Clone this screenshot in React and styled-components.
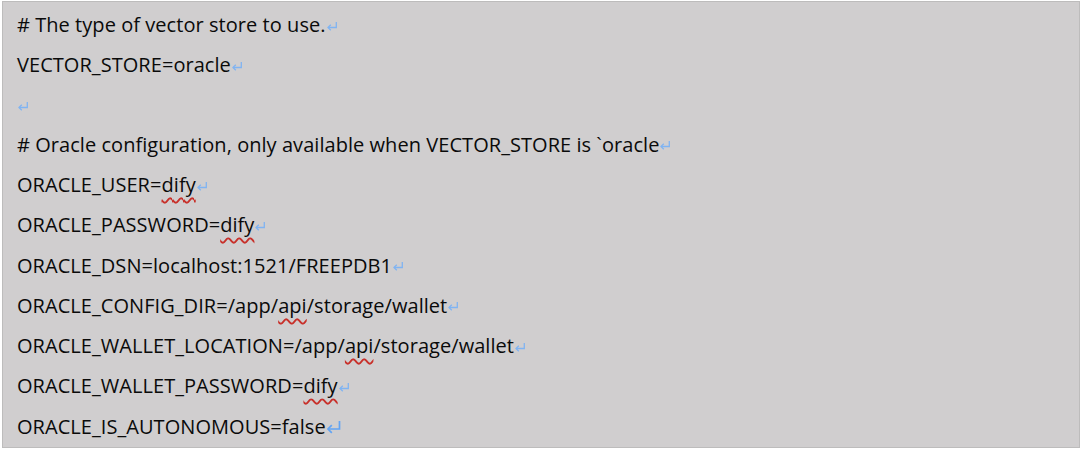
import React from "react";
import styled, { createGlobalStyle } from "styled-components";

const Global = createGlobalStyle`
  html, body { margin: 0; padding: 0; background: #ffffff; }
  body { font-family: "Open Sans", "Noto Sans", sans-serif; }
`;

const Frame = styled.div`
  width: 1080px;
  height: 449px;
  box-sizing: border-box;
  padding: 1px 0 1px 2px;
  background: #ffffff;
`;

const Cell = styled.div`
  box-sizing: border-box;
  height: 447px;
  background: #d0cecf;
  border: 1px solid #bdbcbc;
  padding: 3px 0 0 14px;
  display: flex;
  flex-direction: column;
`;

const Line = styled.div`
  height: 40.3px;
  line-height: 40.3px;
  font-size: 20px;
  letter-spacing: 0.05px;
  color: #0a0a0a;
  white-space: pre;
  display: flex;
  align-items: baseline;
`;

const Squiggle = styled.span`
  text-decoration-line: underline;
  text-decoration-style: wavy;
  text-decoration-color: #c8302a;
  text-decoration-thickness: 1.5px;
  text-underline-offset: 5px;
`;

const Mark = styled.svg`
  flex: none;
  width: ${(p) => (p.$big ? 16 : 12)}px;
  height: ${(p) => (p.$big ? 14 : 11)}px;
  align-self: center;
  position: relative;
  top: ${(p) => (p.$big ? 0 : 1)}px;
`;

const Ret = ({ big }) =>
  big ? (
    <Mark $big viewBox="0 0 16 14" fill="none">
      <path d="M13.5 1 V9 H2" stroke="#62a4f4" strokeWidth="1.7" />
      <path d="M5.8 5.2 L2 9 L5.8 12.8" stroke="#62a4f4" strokeWidth="1.7" />
    </Mark>
  ) : (
    <Mark viewBox="0 0 12 11" fill="none">
      <path d="M10.3 1 V6.5 H2" stroke="#80b4f2" strokeWidth="1.3" />
      <path d="M4.8 3.7 L2 6.5 L4.8 9.3" stroke="#80b4f2" strokeWidth="1.3" />
    </Mark>
  );

export default function App() {
  return (
    <>
      <Global />
      <Frame>
        <Cell>
          <Line># The type of vector store to use.<Ret /></Line>
          <Line>VECTOR_STORE=oracle<Ret /></Line>
          <Line><Ret /></Line>
          <Line># Oracle configuration, only available when VECTOR_STORE is `oracle<Ret /></Line>
          <Line>ORACLE_USER=<Squiggle>dify</Squiggle><Ret /></Line>
          <Line>ORACLE_PASSWORD=<Squiggle>dify</Squiggle><Ret /></Line>
          <Line>ORACLE_DSN=localhost:1521/FREEPDB1<Ret /></Line>
          <Line>ORACLE_CONFIG_DIR=/app/<Squiggle>api</Squiggle>/storage/wallet<Ret /></Line>
          <Line>ORACLE_WALLET_LOCATION=/app/<Squiggle>api</Squiggle>/storage/wallet<Ret /></Line>
          <Line>ORACLE_WALLET_PASSWORD=<Squiggle>dify</Squiggle><Ret /></Line>
          <Line>ORACLE_IS_AUTONOMOUS=false<Ret big /></Line>
        </Cell>
      </Frame>
    </>
  );
}
